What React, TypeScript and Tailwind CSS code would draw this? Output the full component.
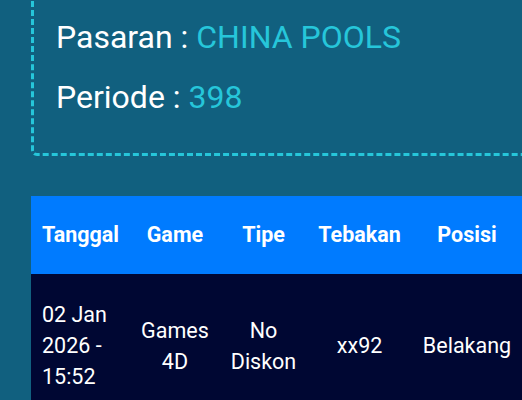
import React from "react";

export default function App() {
  return (
    <div className="w-[522px] h-[400px] overflow-hidden bg-[#11607f]" style={{ fontFamily: "Roboto, 'Liberation Sans', sans-serif" }}>
      <div className="ml-[31px] w-[560px]">
        <div className="-mt-[10px] border-[3px] border-dashed border-[#26c6da] rounded-md pl-[22px] pt-[20px] pb-[32px]">
          <p className="text-[32px] leading-[48px] text-white">
            Pasaran : <span className="text-[#26c6da]">CHINA POOLS</span>
          </p>
          <p className="mt-[12px] text-[32px] leading-[48px] text-white">
            Periode : <span className="text-[#26c6da]">398</span>
          </p>
        </div>
        <div className="mt-[40px] w-[491px]">
          <table className="w-full border-collapse text-[21.5px] leading-[31px] text-white">
            <thead>
              <tr className="bg-[#007bff]">
                <th className="px-[11px] pt-[23px] pb-[24px] text-left font-bold">Tanggal</th>
                <th className="px-[11px] pt-[23px] pb-[24px] text-center font-bold">Game</th>
                <th className="px-[11px] pt-[23px] pb-[24px] text-center font-bold">Tipe</th>
                <th className="px-[11px] pt-[23px] pb-[24px] text-center font-bold">Tebakan</th>
                <th className="px-[11px] pt-[23px] pb-[24px] text-center font-bold">Posisi</th>
              </tr>
            </thead>
            <tbody>
              <tr className="bg-[#000733]">
                <td className="px-[11px] py-[25px] text-left align-middle">02 Jan<br />2026 -<br />15:52</td>
                <td className="px-[11px] py-[25px] text-center align-middle">Games<br />4D</td>
                <td className="px-[11px] py-[25px] text-center align-middle">No<br />Diskon</td>
                <td className="px-[11px] py-[25px] text-center align-middle">xx92</td>
                <td className="px-[11px] py-[25px] text-center align-middle">Belakang</td>
              </tr>
            </tbody>
          </table>
        </div>
      </div>
    </div>
  );
}
